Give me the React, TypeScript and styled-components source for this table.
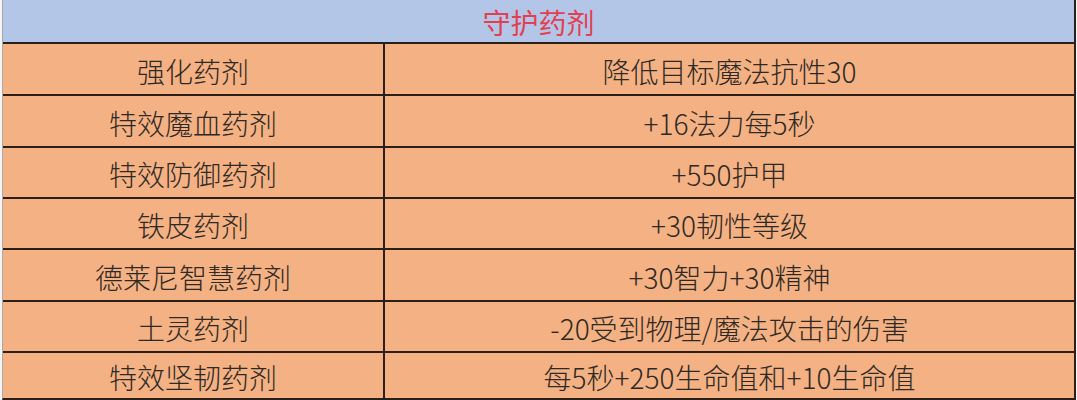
import { Fragment } from 'react';
import styled, { createGlobalStyle } from 'styled-components';

const GlobalStyle = createGlobalStyle`
  html, body {
    margin: 0;
    padding: 0;
    background: #f4f4f4;
  }
  body {
    font-family: "Noto Sans CJK SC", "Liberation Sans", sans-serif;
  }
`;

const rows: [string, string][] = [
  ['强化药剂', '降低目标魔法抗性30'],
  ['特效魔血药剂', '+16法力每5秒'],
  ['特效防御药剂', '+550护甲'],
  ['铁皮药剂', '+30韧性等级'],
  ['德莱尼智慧药剂', '+30智力+30精神'],
  ['土灵药剂', '-20受到物理/魔法攻击的伤害'],
  ['特效坚韧药剂', '每5秒+250生命值和+10生命值'],
];

const Page = styled.div`
  width: 1077px;
  height: 400px;
  padding-left: 2px;
  box-sizing: border-box;
  overflow: hidden;
`;

const Table = styled.div`
  display: grid;
  grid-template-columns: 380px 689px;
  grid-template-rows: 42px 50px 50px 49px 49px 50px 49px 45px;
  gap: 2px;
  width: 1074px;
  box-sizing: border-box;
  background: #2b1f17;
  border-left: 1px solid #a9a9a9;
  border-right: 2px solid #2b1f17;
  border-bottom: 2px solid #2b1f17;
`;

const Title = styled.div`
  grid-column: 1 / span 2;
  display: flex;
  align-items: center;
  justify-content: center;
  background: #b4c6e7;
  color: #e23f52;
  font-size: 28px;
  line-height: 1;
  padding-top: 2px;
`;

const Cell = styled.div`
  display: flex;
  align-items: center;
  justify-content: center;
  background: #f4b183;
  color: #2e2925;
  font-size: 28px;
  font-weight: 300;
  line-height: 1;
  white-space: nowrap;
  padding-top: 3px;
`;

export default function App() {
  return (
    <>
      <GlobalStyle />
      <Page>
        <Table>
          <Title>守护药剂</Title>
          {rows.map(([name, effect]) => (
            <Fragment key={name}>
              <Cell>{name}</Cell>
              <Cell>{effect}</Cell>
            </Fragment>
          ))}
        </Table>
      </Page>
    </>
  );
}
